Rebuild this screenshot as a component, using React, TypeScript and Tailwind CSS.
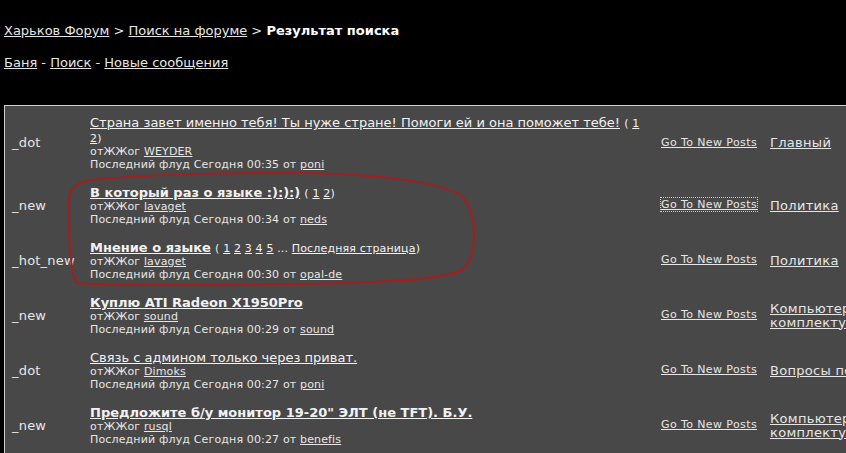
import React from "react";

const F = { fontFamily: '"DejaVu Sans", Verdana, sans-serif' };

type Row = {
  label: string;
  title: React.ReactNode;
  author: string;
  time: string;
  last: string;
  cat: React.ReactNode;
  focus?: boolean;
};

const Pg = ({ n }: { n: string }) => <a className="underline">{n}</a>;

const rows: Row[] = [
  {
    label: "_dot",
    title: (
      <>
        <a className="underline">Страна завет именно тебя! Ты нуже стране! Помоги ей и она поможет тебе!</a>{" "}
        <span className="text-[11px] leading-none tracking-[0.15px]">
          ( <Pg n="1" /> <Pg n="2" />)
        </span>
      </>
    ),
    author: "WEYDER",
    time: "00:35",
    last: "poni",
    cat: <a className="underline">Главный</a>,
  },
  {
    label: "_new",
    title: (
      <>
        <a className="underline font-bold">В который раз о языке :):):)</a>{" "}
        <span className="text-[11px] leading-none tracking-[0.15px]">
          ( <Pg n="1" /> <Pg n="2" />)
        </span>
      </>
    ),
    author: "lavaget",
    time: "00:34",
    last: "neds",
    cat: <a className="underline">Политика</a>,
    focus: true,
  },
  {
    label: "_hot_new",
    title: (
      <>
        <a className="underline font-bold">Мнение о языке</a>{" "}
        <span className="text-[11px] leading-none tracking-[0.15px]">
          ( <Pg n="1" /> <Pg n="2" /> <Pg n="3" /> <Pg n="4" /> <Pg n="5" /> ... <a className="underline">Последняя страница</a>)
        </span>
      </>
    ),
    author: "lavaget",
    time: "00:30",
    last: "opal-de",
    cat: <a className="underline">Политика</a>,
  },
  {
    label: "_new",
    title: <a className="underline font-bold">Куплю ATI Radeon X1950Pro</a>,
    author: "sound",
    time: "00:29",
    last: "sound",
    cat: <a className="underline">Компьютеры и комплектующие</a>,
  },
  {
    label: "_dot",
    title: <a className="underline">Связь с админом только через приват.</a>,
    author: "Dimoks",
    time: "00:27",
    last: "poni",
    cat: <a className="underline">Вопросы по форуму</a>,
  },
  {
    label: "_new",
    title: <a className="underline font-bold">Предложите б/у монитор 19-20" ЭЛТ (не TFT). Б.У.</a>,
    author: "rusql",
    time: "00:27",
    last: "benefis",
    cat: <a className="underline">Компьютеры и комплектующие</a>,
  },
];

export default function App() {
  return (
    <div className="w-[846px] h-[453px] overflow-hidden bg-black text-[#e6e6e6] relative" style={F}>
      <div className="pt-[23px] pl-[4px] text-[13px] leading-[16px]">
        <a className="underline">Харьков Форум</a> &gt; <a className="underline">Поиск на форуме</a> &gt;{" "}
        <span className="font-bold text-white">Результат поиска</span>
      </div>
      <div className="pt-[16px] pl-[4px] text-[13px] leading-[16px]">
        <a className="underline">Баня</a> - <a className="underline">Поиск</a> - <a className="underline">Новые сообщения</a>
      </div>
      <div className="mt-[34px] ml-[4px] w-[1000px] border-t border-l border-[#cfcfcf] bg-[#484848] pt-[2px]">
        {rows.map((r, i) => (
          <div key={i} className="flex items-center py-[7px]">
            <div className="w-[85px] pl-[7px] text-[13px] tracking-[0.2px] shrink-0">{r.label}</div>
            <div className="w-[556px] shrink-0">
              <div className="text-[13px] leading-[15px] text-[#f2f2f2]">{r.title}</div>
              <div className="text-[11px] leading-[13px] tracking-[0.15px]">
                отЖЖог <a className="underline">{r.author}</a>
              </div>
              <div className="text-[11px] leading-[13px] tracking-[0.15px]">
                Последний флуд Сегодня {r.time} от <a className="underline">{r.last}</a>
              </div>
            </div>
            <div className="w-[124px] pl-[15px] shrink-0 text-[11px] tracking-[0.4px]">
              <a className={"underline " + (r.focus ? "outline outline-1 outline-dotted outline-[#cccccc]" : "")}>Go To New Posts</a>
            </div>
            <div className="w-[160px] shrink-0 text-[13px] leading-[14px] tracking-[0.3px]">{r.cat}</div>
          </div>
        ))}
      </div>
      <svg className="absolute left-0 top-0 pointer-events-none" width="846" height="453">
        <path
          d="M 90 180 C 130 176, 210 172, 300 173 C 380 174, 440 182, 462 196 C 478 215, 478 255, 462 270 C 440 281, 360 283, 300 284 C 200 285, 110 286, 77 283 C 70 275, 68 230, 69 198 C 70 188, 76 183, 90 180 Z"
          fill="none"
          stroke="#a11f1f"
          strokeWidth="2"
        />
      </svg>
    </div>
  );
}
